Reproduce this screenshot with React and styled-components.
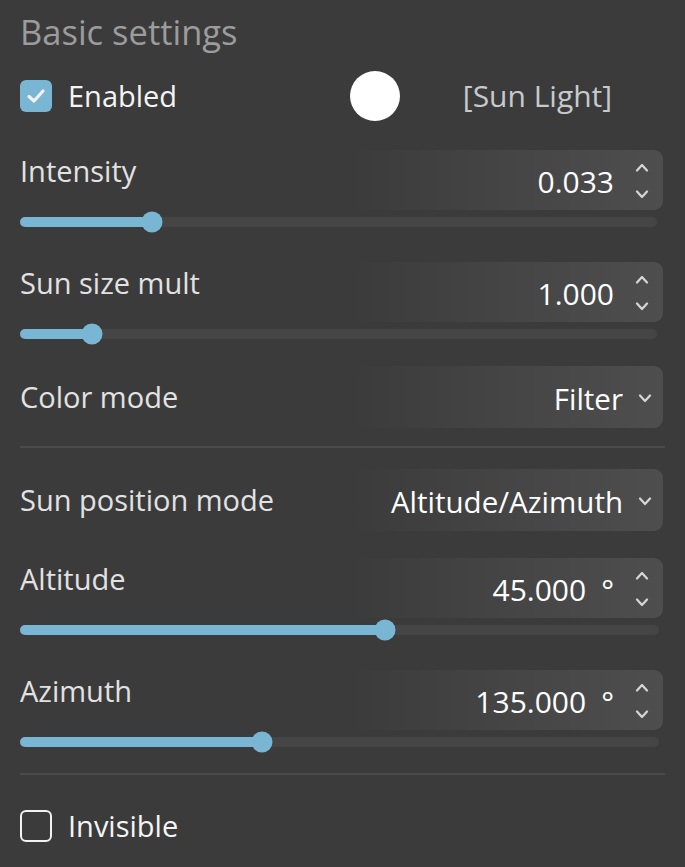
import styled, { createGlobalStyle } from "styled-components";

const GlobalStyle = createGlobalStyle`
	html, body {
		margin: 0;
		padding: 0;
		background: #3b3b3b;
	}
	body {
		font-family: "Open Sans", "Noto Sans", sans-serif;
	}
`;

const Panel = styled.div`
	width: 685px;
	height: 867px;
	box-sizing: border-box;
	padding: 14px 20px 0 20px;
	display: flex;
	flex-direction: column;
	background: #3b3b3b;
	overflow: hidden;
`;

const Title = styled.div`
	height: 36px;
	line-height: 36px;
	font-size: 34.5px;
	color: #9c9c9c;
`;

const TopRow = styled.div`
	margin-top: 21px;
	height: 50px;
	display: grid;
	grid-template-columns: 330px 50px 1fr;
	align-items: center;
`;

const CheckLine = styled.label`
	display: flex;
	align-items: center;
	gap: 16px;
	font-size: 29px;
	line-height: 32px;
	color: #f4f4f4;
	height: 32px;
	margin-top: ${(p) => p.$mt || 0}px;
`;

const Box = styled.span`
	width: 32px;
	height: 32px;
	box-sizing: border-box;
	border-radius: 6px;
	display: flex;
	align-items: center;
	justify-content: center;
	background: ${(p) => (p.$checked ? "#78b6d4" : "transparent")};
	border: ${(p) => (p.$checked ? "none" : "2px solid #f2f2f2")};
`;

const Swatch = styled.div`
	width: 50px;
	height: 50px;
	border-radius: 50%;
	background: #ffffff;
`;

const TypeName = styled.div`
	font-size: 30px;
	line-height: 32px;
	color: #c6cacd;
	text-align: center;
	padding-left: 10px;
`;

const Field = styled.div`
	margin-top: ${(p) => p.$mt}px;
	display: flex;
	flex-direction: column;
`;

const FieldHead = styled.div`
	display: flex;
	justify-content: space-between;
	align-items: ${(p) => (p.$center ? "center" : "flex-start")};
`;

const Label = styled.div`
	font-size: 29px;
	line-height: 38px;
	color: #e2e2e2;
	padding-top: ${(p) => (p.$center ? 0 : 2)}px;
`;

const InputBox = styled.div`
	width: 313px;
	height: ${(p) => p.$h}px;
	box-sizing: border-box;
	border-radius: 9px;
	background: linear-gradient(90deg, rgba(77, 77, 77, 0) 0%, #434343 40%, #4e4e4e 100%);
	display: flex;
	align-items: center;
	justify-content: flex-end;
	padding-right: ${(p) => p.$pr}px;
	gap: ${(p) => p.$gap}px;
	margin-right: 2px;
`;

const Value = styled.span`
	font-size: ${(p) => p.$size}px;
	color: #ffffff;
	padding-top: 3px;
	white-space: pre;
`;

const Spinner = styled.div`
	width: 12px;
	display: flex;
	flex-direction: column;
	align-items: center;
	gap: 18px;
	padding-top: 2px;
`;

const Track = styled.div`
	position: relative;
	margin-top: 7px;
	margin-right: ${(p) => p.$mr}px;
	height: 10px;
	border-radius: 5px;
	background: #454545;
`;

const Fill = styled.div`
	height: 100%;
	border-radius: 5px;
	background: #78b6d4;
`;

const Thumb = styled.div`
	position: absolute;
	top: 50%;
	width: 21px;
	height: 21px;
	border-radius: 50%;
	background: #78b6d4;
	transform: translate(-50%, -50%);
`;

const Divider = styled.div`
	margin-top: ${(p) => p.$mt}px;
	height: 2px;
	background: #4b4b4b;
`;

const Check = () => (
	<svg width="20" height="16" viewBox="0 0 20 16">
		<polyline points="3,8.5 8,13 17,3" fill="none" stroke="#f2f2f2" strokeWidth="3.2" strokeLinecap="round" strokeLinejoin="round" />
	</svg>
);

const Chevron = ({ up }) => (
	<svg width="14" height="9" viewBox="0 0 14 9">
		<polyline
			points={up ? "2,7.5 7,2 12,7.5" : "2,1.5 7,7 12,1.5"}
			fill="none"
			stroke="#d6d6d6"
			strokeWidth="2.2"
			strokeLinecap="round"
			strokeLinejoin="round"
		/>
	</svg>
);

function NumberField({ label, value, pct, mt, mr = 8 }) {
	return (
		<Field $mt={mt}>
			<FieldHead>
				<Label>{label}</Label>
				<InputBox $h={60} $pr={15} $gap={22}>
					<Value $size={30}>{value}</Value>
					<Spinner>
						<Chevron up />
						<Chevron />
					</Spinner>
				</InputBox>
			</FieldHead>
			<Track $mr={mr}>
				<Fill style={{ width: `${pct}%` }} />
				<Thumb style={{ left: `${pct}%` }} />
			</Track>
		</Field>
	);
}

function SelectField({ label, value, mt }) {
	return (
		<Field $mt={mt}>
			<FieldHead $center>
				<Label $center>{label}</Label>
				<InputBox $h={62} $pr={12} $gap={16}>
					<Value $size={29.5}>{value}</Value>
					<Spinner>
						<Chevron />
					</Spinner>
				</InputBox>
			</FieldHead>
		</Field>
	);
}

export default function App() {
	return (
		<>
			<GlobalStyle />
			<Panel>
				<Title>Basic settings</Title>
				<TopRow>
					<CheckLine>
						<Box $checked>
							<Check />
						</Box>
						Enabled
					</CheckLine>
					<Swatch />
					<TypeName>[Sun Light]</TypeName>
				</TopRow>
				<NumberField label="Intensity" value="0.033" pct={20.7} mt={29} />
				<NumberField label="Sun size mult" value="1.000" pct={11.3} mt={35} />
				<SelectField label="Color mode" value="Filter" mt={27} />
				<Divider $mt={18} />
				<SelectField label="Sun position mode" value="Altitude/Azimuth" mt={21} />
				<NumberField label="Altitude" value={"45.000\u2002°"} pct={57.1} mt={27} mr={6} />
				<NumberField label="Azimuth" value={"135.000\u2002°"} pct={37.9} mt={35} mr={6} />
				<Divider $mt={26} />
				<CheckLine $mt={35}>
					<Box />
					Invisible
				</CheckLine>
			</Panel>
		</>
	);
}
